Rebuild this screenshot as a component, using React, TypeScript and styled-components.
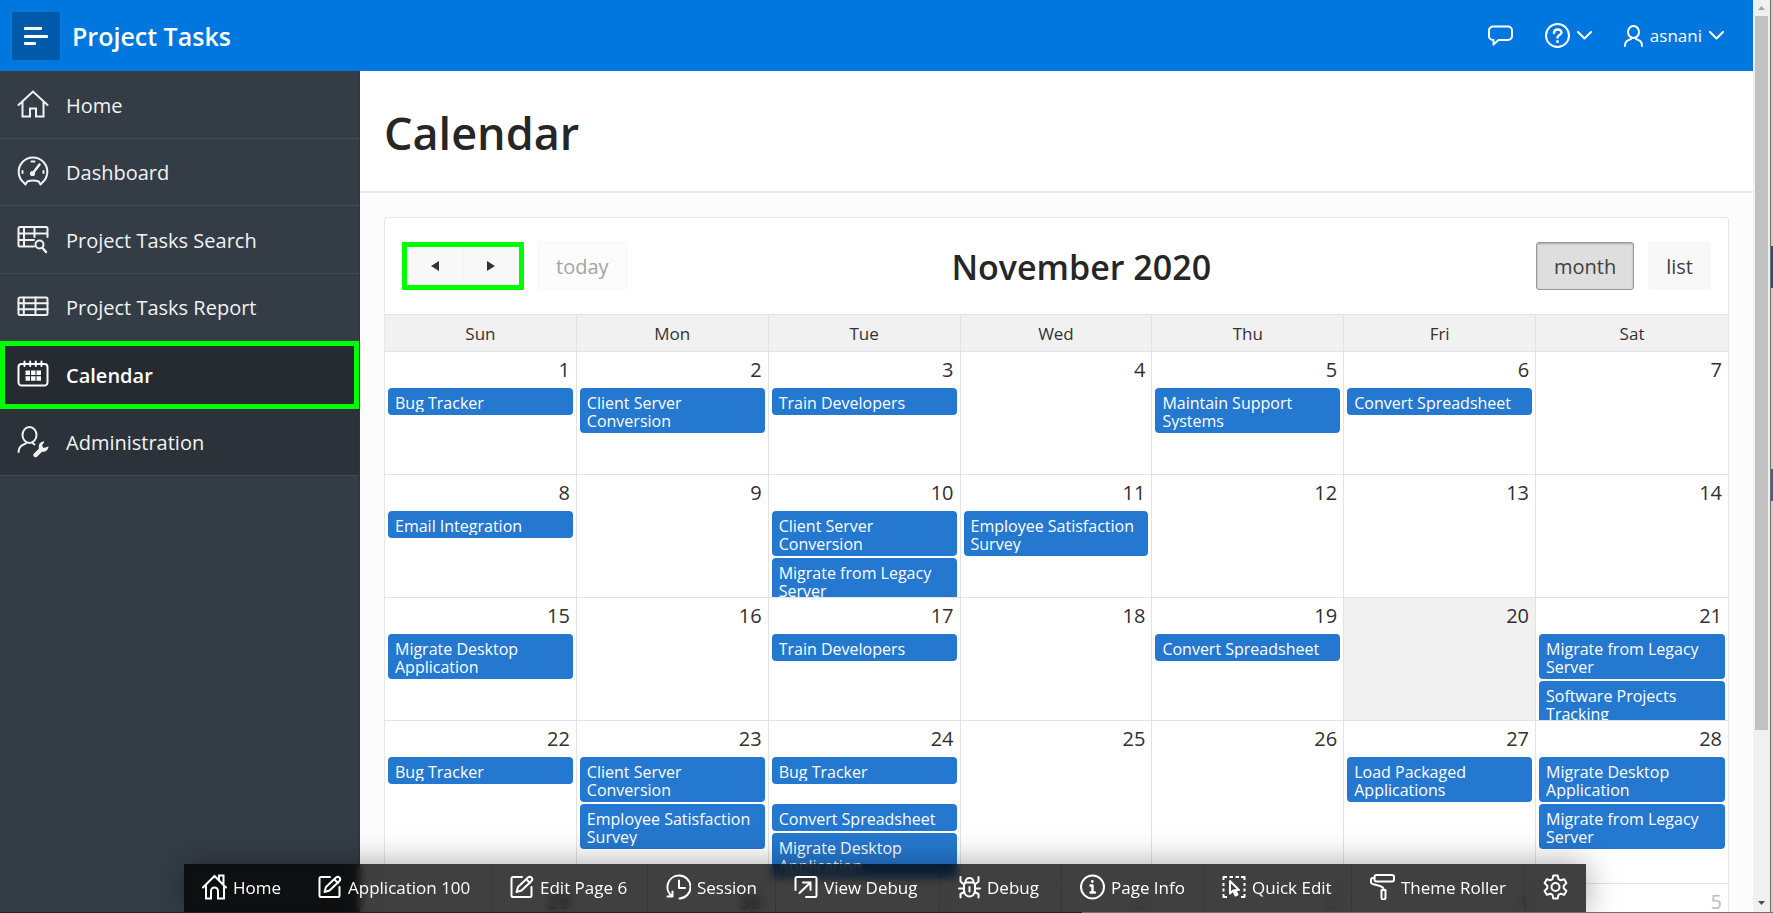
import React from "react";
import styled, { createGlobalStyle, css } from "styled-components";

const Global = createGlobalStyle`
  *, *::before, *::after { box-sizing: border-box; }
  html, body { margin: 0; height: 100%; }
  body { font-family: "Open Sans", "Noto Sans", sans-serif; color: #262626; background: #fcfcfc; overflow: hidden; }
  button { font-family: inherit; }
  a { color: inherit; text-decoration: none; }
  h1, h2 { margin: 0; }
`;

const Window = styled.div`
  display: flex;
  height: 100vh;
  background: #cfcfcf;
`;

const Page = styled.div`
  flex: 1;
  min-width: 0;
  display: flex;
  flex-direction: column;
  overflow: hidden;
`;

const Header = styled.header`
  flex: none;
  height: 71px;
  display: flex;
  align-items: center;
  padding: 0 29px 0 12px;
  background: #0076df;
  color: #fff;
`;

const MenuToggle = styled.button`
  width: 48px;
  height: 48px;
  padding: 0;
  border: 0;
  border-radius: 3px;
  background: #005aaa;
  color: #fff;
  svg { display: block; }
`;

const AppName = styled.a`
  margin-left: 12px;
  font-size: 25px;
  font-weight: 600;
`;

const HeaderNav = styled.nav`
  display: flex;
  align-items: center;
  gap: 32px;
  margin-left: auto;
`;

const HeaderButton = styled.button`
  display: flex;
  align-items: center;
  gap: 7px;
  padding: 0;
  border: 0;
  background: none;
  color: #fff;
  font-size: 17px;
  svg { display: block; }
`;

const Body = styled.div`
  flex: 1;
  min-height: 0;
  display: flex;
`;

const Sidebar = styled.nav`
  flex: none;
  width: 360px;
  background: #343d46;
  border-right: 1px solid #2e363e;
`;

const NavList = styled.ul`
  display: grid;
  grid-template-rows: repeat(6, 1fr);
  height: 405px;
  margin: 0;
  padding: 0;
  list-style: none;
`;

const NavItem = styled.li`
  display: flex;
`;

const NavLink = styled.a<{ $state?: "current" | "after" }>`
  flex: 1;
  display: flex;
  align-items: center;
  gap: 17px;
  padding: 0 17px;
  border-bottom: 1px solid #434d57;
  color: #f2f2f2;
  font-size: 20px;
  svg { display: block; flex: none; }
  ${(p) => p.$state === "after" && css`background: #2b3239;`}
  ${(p) =>
    p.$state === "current" &&
    css`
      background: #252b31;
      color: #fff;
      font-weight: 600;
      outline: 5px solid #00ff00;
      outline-offset: -5px;
      border-bottom: 0;
    `}
`;

const NavText = styled.span`
  padding-top: 2px;
`;

const Main = styled.main`
  flex: 1;
  min-width: 0;
  background: #fcfcfc;
`;

const TitleBar = styled.div`
  height: 122px;
  display: flex;
  align-items: center;
  padding: 4px 24px 0;
  background: #fff;
  border-bottom: 2px solid #e6e6e6;
`;

const PageTitle = styled.h1`
  font-size: 45px;
  line-height: 60px;
  font-weight: 600;
`;

const Card = styled.section`
  margin: 24px 24px 0;
  background: #fff;
  border: 1px solid #e6e6e6;
  border-radius: 3px;
`;

const Toolbar = styled.div`
  display: flex;
  justify-content: space-between;
  align-items: center;
  height: 96px;
  padding: 0 17px;
`;

const ToolGroup = styled.div`
  display: flex;
  gap: 14px;
`;

const ArrowPair = styled.div`
  display: flex;
  width: 122px;
  height: 48px;
  border: 5px solid #00ff00;
  background: #f8f8f8;
`;

const ArrowButton = styled.button`
  flex: 1;
  display: flex;
  align-items: center;
  justify-content: center;
  padding: 0;
  border: 0;
  background: none;
  color: #333;
  & + & { border-left: 1px solid #f2f2f2; }
`;

const ToolButton = styled.button<{ $active?: boolean }>`
  height: 48px;
  padding: 0 17px;
  border: 1px solid #f7f7f7;
  border-radius: 3px;
  background: #f8f8f8;
  color: #404040;
  font-size: 20px;
  &:disabled { background: #fcfcfc; color: #a3a3a3; }
  ${(p) =>
    p.$active &&
    css`
      background: #dedede;
      border-color: #989898;
      box-shadow: inset 0 1px 2px rgba(0, 0, 0, 0.25);
    `}
`;

const MonthTitle = styled.h2`
  padding-top: 2px;
  font-size: 34px;
  font-weight: 600;
`;

const Table = styled.table`
  width: 100%;
  table-layout: fixed;
  border-collapse: separate;
  border-spacing: 0;
`;

const DayName = styled.th`
  height: 38px;
  padding: 0;
  border: 1px solid #e3e3e3;
  border-left: 0;
  background: #f1f1f1;
  color: #333;
  font-size: 17px;
  font-weight: 400;
  &:last-child { border-right: 0; }
`;

const Day = styled.td<{ $today?: boolean }>`
  padding: 0;
  vertical-align: top;
  border-right: 1px solid #e3e3e3;
  border-bottom: 1px solid #e3e3e3;
  background: ${(p) => (p.$today ? "#f1f1f1" : "#fff")};
  &:last-child { border-right: 0; }
`;

const DayBox = styled.div<{ $tall?: boolean }>`
  height: ${(p) => (p.$tall ? 162 : 122)}px;
  overflow: hidden;
`;

const DayNumber = styled.div<{ $muted?: boolean }>`
  height: 36px;
  padding: 0 6px;
  text-align: right;
  font-size: 20px;
  line-height: 36px;
  color: ${(p) => (p.$muted ? "#bdbdbd" : "#303030")};
`;

const Event = styled.a<{ $spaced?: boolean }>`
  display: block;
  margin: 0 3px ${(p) => (p.$spaced ? 20 : 2)}px;
  padding: 6px 7px 3px;
  border-radius: 4px;
  background: #2578cf;
  color: #fff;
  font-size: 16px;
  line-height: 18px;
`;

const EventText = styled.span`
  display: block;
  overflow: hidden;
`;

const Scrollbar = styled.div`
  flex: none;
  width: 17px;
  display: flex;
  flex-direction: column;
  align-items: center;
  background: #f0f0f0;
  svg { display: block; flex: none; }
`;

const Thumb = styled.div`
  width: 13px;
  flex: 714;
  background: #c1c1c1;
`;

const ThumbRest = styled.div`
  flex: 165;
`;

const WindowEdge = styled.div`
  flex: none;
  width: 3px;
  border-left: 1px solid #6b6b6b;
  background: linear-gradient(
    #cfcfcf 246px,
    #0059ad 246px 288px,
    #cfcfcf 288px 469px,
    #2268b4 469px 501px,
    #cfcfcf 501px
  );
`;

const DevBar = styled.nav`
  position: fixed;
  left: 0;
  right: 3px;
  bottom: 1px;
  display: flex;
  justify-content: center;
`;

const DevItems = styled.div`
  display: flex;
  height: 48px;
  background: rgba(0, 0, 0, 0.75);
  backdrop-filter: blur(4px);
  box-shadow: 0 0 32px rgba(0, 0, 0, 0.35);
`;

const DevButton = styled.button<{ $width: number }>`
  width: ${(p) => p.$width}px;
  display: flex;
  align-items: center;
  gap: 6px;
  padding: 0 0 2px 18px;
  border: 0;
  border-right: 1px solid rgba(0, 0, 0, 0.15);
  background: none;
  color: #fff;
  font-size: 17px;
  white-space: nowrap;
  &:last-child { border-right: 0; }
  svg { display: block; flex: none; }
`;

const BottomEdge = styled.div`
  position: fixed;
  left: 0;
  right: 0;
  bottom: 0;
  height: 1px;
  background: linear-gradient(to right, #222 61%, #707070 61%);
`;

type IconProps = { w: number; h: number; sw?: number; children: React.ReactNode };

function Icon({ w, h, sw = 2, children }: IconProps) {
  return (
    <svg
      width={w}
      height={h}
      viewBox={`0 0 ${w} ${h}`}
      fill="none"
      stroke="currentColor"
      strokeWidth={sw}
      strokeLinecap="round"
      strokeLinejoin="round"
      aria-hidden="true"
    >
      {children}
    </svg>
  );
}

const Chevron = () => (
  <Icon w={15} h={9}>
    <path d="M1 1l6.500 6.500L14 1" />
  </Icon>
);

const navIcons = {
  home: (
    <Icon w={32} h={32}>
      <path d="M1.500 17L16 3.500l14.500 13.500M5.500 14V28.500H13v-8h6v8h7.500V14" strokeLinejoin="miter" />
    </Icon>
  ),
  dashboard: (
    <Icon w={32} h={32}>
      <path d="M8.500 28.500l-1.600-1.700A14.300 14.300 0 1 1 25.100 26.800l-1.600 1.700-1.800-3a17 17 0 0 0-11.400 0z" />
      <path d="M16 17l6.500-8.500" strokeWidth="2.500" />
      <circle cx="15.500" cy="17.500" r="1.600" fill="currentColor" />
      <path d="M14.500 5.500h3M5.500 15v2M26.500 15v2" />
    </Icon>
  ),
  search: (
    <Icon w={32} h={32}>
      <path d="M17 23.500H3a1.500 1.500 0 0 1-1.500-1.500V5.500A1.500 1.500 0 0 1 3 4h26a1.500 1.500 0 0 1 1.500 1.500V14M1.500 10.500h29M1.500 17H17M7 4v19.500M17.500 4v10" />
      <circle cx="22.500" cy="21.500" r="4" />
      <path d="M25.500 25l3.500 4" strokeWidth="2.500" />
    </Icon>
  ),
  report: (
    <Icon w={32} h={32}>
      <rect x="1.500" y="6.500" width="29" height="17.500" rx="1.500" />
      <path d="M1.500 12.300h29M1.500 18.200h29M6.800 6.500v17.500M18.500 6.500v17.500" />
    </Icon>
  ),
  calendar: (
    <Icon w={32} h={32}>
      <path d="M5 5H4.500a3 3 0 0 0-3 3V23.500a3 3 0 0 0 3 3h23a3 3 0 0 0 3-3V8a3 3 0 0 0-3-3H6" />
      <path d="M7.500 2.500V7M13.200 2.500V7M18.800 2.500V7M24.500 2.500V7" />
      <path
        d="M8.500 11.500h4.500v4.500H8.500zM14 11.500h4.500v4.500H14zM19.500 11.500h4.500v4.500h-4.500zM8.500 17.200h4.500v4.500H8.500zM14 17.200h4.500v4.500H14zM19.500 17.200h4.500v4.500h-4.500z"
        fill="currentColor"
        stroke="none"
      />
    </Icon>
  ),
  admin: (
    <Icon w={32} h={32}>
      <ellipse cx="12.500" cy="9" rx="7" ry="8" />
      <path d="M9.500 17c-4.500 2-8 3.500-8 9M15.500 17l2 1.500" />
      <path
        d="M16.500 28l5.500-5.500c-1-4 1.500-7.500 5.500-7l-2.500 4 1.500 2.500 5-1.500c0 3.500-3.500 6-6.500 5.200l-5 5c-2 1.500-4.500-.2-3.500-2.700z"
        fill="currentColor"
        stroke="none"
      />
    </Icon>
  ),
};

const devIcons = {
  home: (
    <Icon w={25} h={26}>
      <path
        d="M1 13.500L12.500 2 24 13.500M4 11.500V24.500h5V17a3.500 3.500 0 0 1 7 0v7.500h6V11.500M17 6V1.500h4.500V10.500"
        strokeLinejoin="miter"
      />
    </Icon>
  ),
  edit: (
    <Icon w={24} h={24}>
      <path d="M12 2H3a1.500 1.500 0 0 0-1.500 1.500v17A1.500 1.500 0 0 0 3 22h17a1.500 1.500 0 0 0 1.500-1.500v-8.500" />
      <path d="M6.500 17l1.500-5L18 2.500c2.500-2 5.500 1 3.500 3.500L11.500 15.500zM16.500 4.500l3.500 3.500" />
    </Icon>
  ),
  session: (
    <Icon w={25} h={26}>
      <path d="M6 22.500H1.500M6.500 22.500v-5M6.500 22.500A11.500 11.500 0 0 1 12.500 1.500a11.500 11.500 0 0 1 1 23" />
      <path d="M13 6.500V14h6" />
    </Icon>
  ),
  viewDebug: (
    <Icon w={24} h={24}>
      <path d="M1.500 15V3.500A1.500 1.500 0 0 1 3 2h18a1.500 1.500 0 0 1 1.500 1.500V20.500A1.500 1.500 0 0 1 21 22h-9" />
      <path d="M5.500 18L16.500 7.500M9 7.500h7.500V15" />
    </Icon>
  ),
  debug: (
    <Icon w={23} h={24}>
      <path d="M6 10a2.500 2.500 0 0 1 2.500-2.500h6A2.500 2.500 0 0 1 17 10v6a5.500 5.500 0 0 1-11 0z" />
      <path d="M7.500 7c0-5.500 8-5.500 8 0M11.500 12v4.500M1 13.500h5M17 13.500h5M2.500 2v4.500L6 9.500M20.500 2v4.500L17 9.500M2.500 22.500v-3.500l4-2M20.500 22.500v-3.500l-4-2" />
    </Icon>
  ),
  info: (
    <Icon w={25} h={26}>
      <circle cx="12.500" cy="13" r="11.500" />
      <path d="M10.500 11.500h2V18M10.500 18.500h4.500" strokeWidth="2.400" />
      <circle cx="12.300" cy="7.500" r="1.400" fill="currentColor" stroke="none" />
    </Icon>
  ),
  quick: (
    <Icon w={24} h={24}>
      <path
        d="M1.500 5V2H5M19 2h3.500V5M22.500 19v3H19M5 22H1.500V19M7.500 2h3.500M13.500 2h3.500M1.500 8v3M1.500 13.500v3M22.500 8v3M22.500 13.500v3"
        strokeLinecap="butt"
      />
      <path d="M8 6v12.500l3.200-3 2.300 5 2-1-2.300-4.500H17z" />
    </Icon>
  ),
  roller: (
    <Icon w={25} h={26}>
      <rect x="4.500" y="1" width="19.500" height="6.500" rx="2" />
      <path d="M4.500 4H3a2 2 0 0 0-2 2v2.500c0 3 12.500 2 12.500 6.500v1" />
      <path d="M11.500 16h4v7.500a2 2 0 0 1-4 0z" />
    </Icon>
  ),
  gear: (
    <Icon w={25} h={26}>
      <path d="M10.300 1.500h4.400l.8 3.600 2.200 1.200 3.500-1.100 2.200 3.900-2.700 2.600v2.600l2.700 2.600-2.200 3.900-3.500-1.100-2.200 1.200-.8 3.600h-4.400l-.8-3.600-2.200-1.200-3.500 1.100-2.200-3.900 2.700-2.600v-2.600L1.600 9.100l2.200-3.900 3.500 1.100 2.200-1.200z" />
      <circle cx="12.500" cy="13" r="4" />
    </Icon>
  ),
};

const navEntries: { label: string; icon: keyof typeof navIcons; state?: "current" | "after" }[] = [
  { label: "Home", icon: "home" },
  { label: "Dashboard", icon: "dashboard" },
  { label: "Project Tasks Search", icon: "search" },
  { label: "Project Tasks Report", icon: "report" },
  { label: "Calendar", icon: "calendar", state: "current" },
  { label: "Administration", icon: "admin", state: "after" },
];

const devEntries: { label: string; icon: keyof typeof devIcons; width: number }[] = [
  { label: "Home", icon: "home", width: 116 },
  { label: "Application 100", icon: "edit", width: 192 },
  { label: "Edit Page 6", icon: "edit", width: 156 },
  { label: "Session", icon: "session", width: 128 },
  { label: "View Debug", icon: "viewDebug", width: 164 },
  { label: "Debug", icon: "debug", width: 122 },
  { label: "Page Info", icon: "info", width: 142 },
  { label: "Quick Edit", icon: "quick", width: 148 },
  { label: "Theme Roller", icon: "roller", width: 173 },
  { label: "", icon: "gear", width: 61 },
];

const dayNames = ["Sun", "Mon", "Tue", "Wed", "Thu", "Fri", "Sat"];
const weeks = [
  [1, 2, 3, 4, 5, 6, 7],
  [8, 9, 10, 11, 12, 13, 14],
  [15, 16, 17, 18, 19, 20, 21],
  [22, 23, 24, 25, 26, 27, 28],
  [29, 30, 1, 2, 3, 4, 5],
];

const events: Record<number, string[]> = {
  1: ["Bug Tracker"],
  2: ["Client Server Conversion"],
  3: ["Train Developers"],
  5: ["Maintain Support Systems"],
  6: ["Convert Spreadsheet"],
  8: ["Email Integration"],
  10: ["Client Server Conversion", "Migrate from Legacy Server"],
  11: ["Employee Satisfaction Survey"],
  15: ["Migrate Desktop Application"],
  17: ["Train Developers"],
  19: ["Convert Spreadsheet"],
  21: ["Migrate from Legacy Server", "Software Projects Tracking"],
  22: ["Bug Tracker"],
  23: ["Client Server Conversion", "Employee Satisfaction Survey"],
  24: ["Bug Tracker", "Convert Spreadsheet", "Migrate Desktop Application"],
  27: ["Load Packaged Applications"],
  28: ["Migrate Desktop Application", "Migrate from Legacy Server"],
};

export default function App() {
  return (
    <Window>
      <Global />
      <Page>
        <Header>
          <MenuToggle aria-label="Toggle navigation">
            <svg width="48" height="48" viewBox="0 0 48 48" fill="currentColor" aria-hidden="true">
              <rect x="12" y="15" width="18" height="3" rx="1" />
              <rect x="12" y="23" width="24" height="3" rx="1" />
              <rect x="12" y="30" width="12" height="3" rx="1" />
            </svg>
          </MenuToggle>
          <AppName href="#">Project Tasks</AppName>
          <HeaderNav>
            <HeaderButton aria-label="Feedback">
              <Icon w={25} h={21}>
                <path d="M5 1.500h15a4 4 0 0 1 4 4V11a4 4 0 0 1-4 4H10.500L5.500 19.500V15H5a4 4 0 0 1-4-4V5.500a4 4 0 0 1 4-4z" />
              </Icon>
            </HeaderButton>
            <HeaderButton aria-label="Help">
              <Icon w={25} h={25}>
                <circle cx="12.500" cy="12.500" r="11.500" />
                <path d="M9 10c0-4.500 7.500-4.500 7.500-.5 0 2.500-4 2.500-4 5" strokeWidth="2.400" />
                <circle cx="12.500" cy="18.500" r="1.500" fill="currentColor" stroke="none" />
              </Icon>
              <Chevron />
            </HeaderButton>
            <HeaderButton>
              <Icon w={19} h={22}>
                <ellipse cx="9.500" cy="7" rx="5.500" ry="6" />
                <path d="M7 12.500v1.500c-3.500 1.500-6 2-6 7M12 12.500v1.500c3.500 1.500 6 2 6 7" />
              </Icon>
              asnani
              <Chevron />
            </HeaderButton>
          </HeaderNav>
        </Header>
        <Body>
          <Sidebar>
            <NavList>
              {navEntries.map((n) => (
                <NavItem key={n.label}>
                  <NavLink href="#" $state={n.state} aria-current={n.state === "current" ? "page" : undefined}>
                    {navIcons[n.icon]}
                    <NavText>{n.label}</NavText>
                  </NavLink>
                </NavItem>
              ))}
            </NavList>
          </Sidebar>
          <Main>
            <TitleBar>
              <PageTitle>Calendar</PageTitle>
            </TitleBar>
            <Card>
              <Toolbar>
                <ToolGroup>
                  <ArrowPair>
                    <ArrowButton aria-label="Previous month">
                      <svg width="8" height="10" viewBox="0 0 8 10" fill="currentColor">
                        <path d="M8 0v10L0 5z" />
                      </svg>
                    </ArrowButton>
                    <ArrowButton aria-label="Next month">
                      <svg width="8" height="10" viewBox="0 0 8 10" fill="currentColor">
                        <path d="M0 0v10l8-5z" />
                      </svg>
                    </ArrowButton>
                  </ArrowPair>
                  <ToolButton disabled>today</ToolButton>
                </ToolGroup>
                <MonthTitle>November 2020</MonthTitle>
                <ToolGroup>
                  <ToolButton $active>month</ToolButton>
                  <ToolButton>list</ToolButton>
                </ToolGroup>
              </Toolbar>
              <Table>
                <thead>
                  <tr>
                    {dayNames.map((d) => (
                      <DayName key={d}>{d}</DayName>
                    ))}
                  </tr>
                </thead>
                <tbody>
                  {weeks.map((week, w) => (
                    <tr key={w}>
                      {week.map((day) => (
                        <Day key={day} $today={w === 2 && day === 20}>
                          <DayBox $tall={w === 3}>
                            <DayNumber $muted={w === 4 && day < 20}>{day}</DayNumber>
                            {w < 4 &&
                              (events[day] || []).map((title, i) => (
                                <Event key={title} href="#" $spaced={day === 24 && i === 0}>
                                  <EventText>{title}</EventText>
                                </Event>
                              ))}
                          </DayBox>
                        </Day>
                      ))}
                    </tr>
                  ))}
                </tbody>
              </Table>
            </Card>
          </Main>
        </Body>
      </Page>
      <Scrollbar>
        <svg width="17" height="16" viewBox="0 0 17 16" fill="#a3a3a3">
          <path d="M5 10l3.500-4 3.500 4z" />
        </svg>
        <Thumb />
        <ThumbRest />
        <svg width="17" height="18" viewBox="0 0 17 18" fill="#505050">
          <path d="M5 6h7l-3.500 4z" />
        </svg>
      </Scrollbar>
      <WindowEdge />
      <DevBar>
        <DevItems>
          {devEntries.map((d) => (
            <DevButton key={d.icon + d.label} $width={d.width} aria-label={d.label || "Settings"}>
              {devIcons[d.icon]}
              {d.label}
            </DevButton>
          ))}
        </DevItems>
      </DevBar>
      <BottomEdge />
    </Window>
  );
}
